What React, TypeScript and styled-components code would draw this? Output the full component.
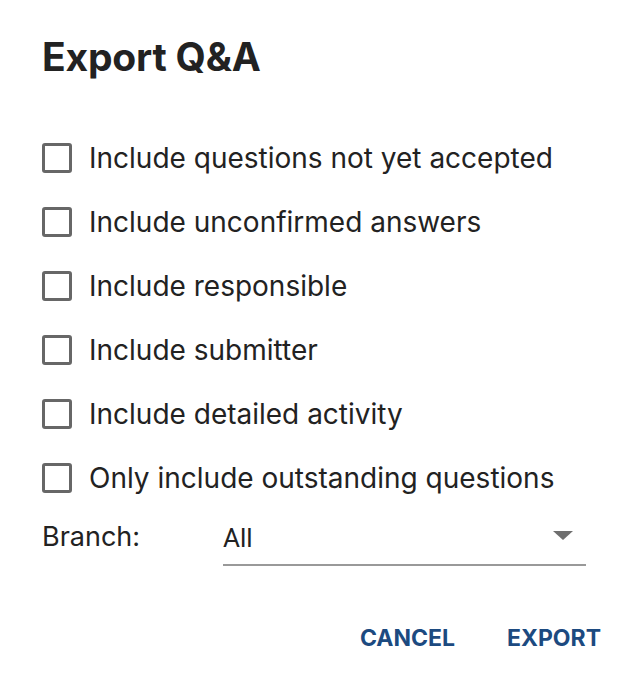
import React from "react";
import styled, { createGlobalStyle } from "styled-components";

const Global = createGlobalStyle`
  html, body { margin: 0; padding: 0; background: #fff; }
  body { font-family: Inter, "Noto Sans", sans-serif; color: #222; }
`;

const Dialog = styled.div`
  width: 630px;
  height: 678px;
  box-sizing: border-box;
  padding: 33px 29px 0 42px;
  display: flex;
  flex-direction: column;
`;

const Title = styled.h2`
  margin: 0;
  font-size: 39px;
  font-weight: 700;
  line-height: 48px;
  color: #222;
  letter-spacing: -0.2px;
`;

const List = styled.div`
  margin-top: 45px;
  display: flex;
  flex-direction: column;
`;

const Row = styled.label`
  height: 64px;
  display: flex;
  align-items: center;
  gap: 17px;
  font-size: 28px;
  color: #222;
`;

const Box = styled.span`
  width: 30px;
  height: 30px;
  box-sizing: border-box;
  border: 3px solid #676767;
  border-radius: 3px;
  flex: none;
`;

const BranchRow = styled.div`
  display: flex;
  align-items: center;
  margin-top: -4px;
  height: 60px;
`;

const BranchLabel = styled.span`
  width: 181px;
  font-size: 27px;
  color: #222;
`;

const Select = styled.div`
  width: 363px;
  height: 60px;
  box-sizing: border-box;
  border-bottom: 2px solid #999;
  display: flex;
  align-items: center;
  justify-content: space-between;
  padding: 5px 13px 0 0;
  font-family: Roboto, "Liberation Sans", sans-serif;
  font-size: 26px;
  color: #222;
`;

const Arrow = styled.span`
  width: 0;
  height: 0;
  margin-top: -4px;
  border-left: 10px solid transparent;
  border-right: 10px solid transparent;
  border-top: 9px solid #6f6f6f;
`;

const Actions = styled.div`
  margin-top: 58px;
  display: flex;
  justify-content: flex-end;
  gap: 52px;
`;

const Button = styled.button`
  background: none;
  border: none;
  padding: 0;
  font-family: Inter, sans-serif;
  font-size: 23px;
  font-weight: 700;
  color: #1c4a80;
  letter-spacing: 0;
  cursor: pointer;
`;

const options = [
  "Include questions not yet accepted",
  "Include unconfirmed answers",
  "Include responsible",
  "Include submitter",
  "Include detailed activity",
  "Only include outstanding questions",
];

export default function App() {
  return (
    <>
      <Global />
      <Dialog>
        <Title>Export Q&amp;A</Title>
        <List>
          {options.map((o) => (
            <Row key={o}>
              <Box />
              {o}
            </Row>
          ))}
        </List>
        <BranchRow>
          <BranchLabel>Branch:</BranchLabel>
          <Select>
            All
            <Arrow />
          </Select>
        </BranchRow>
        <Actions>
          <Button>CANCEL</Button>
          <Button>EXPORT</Button>
        </Actions>
      </Dialog>
    </>
  );
}
